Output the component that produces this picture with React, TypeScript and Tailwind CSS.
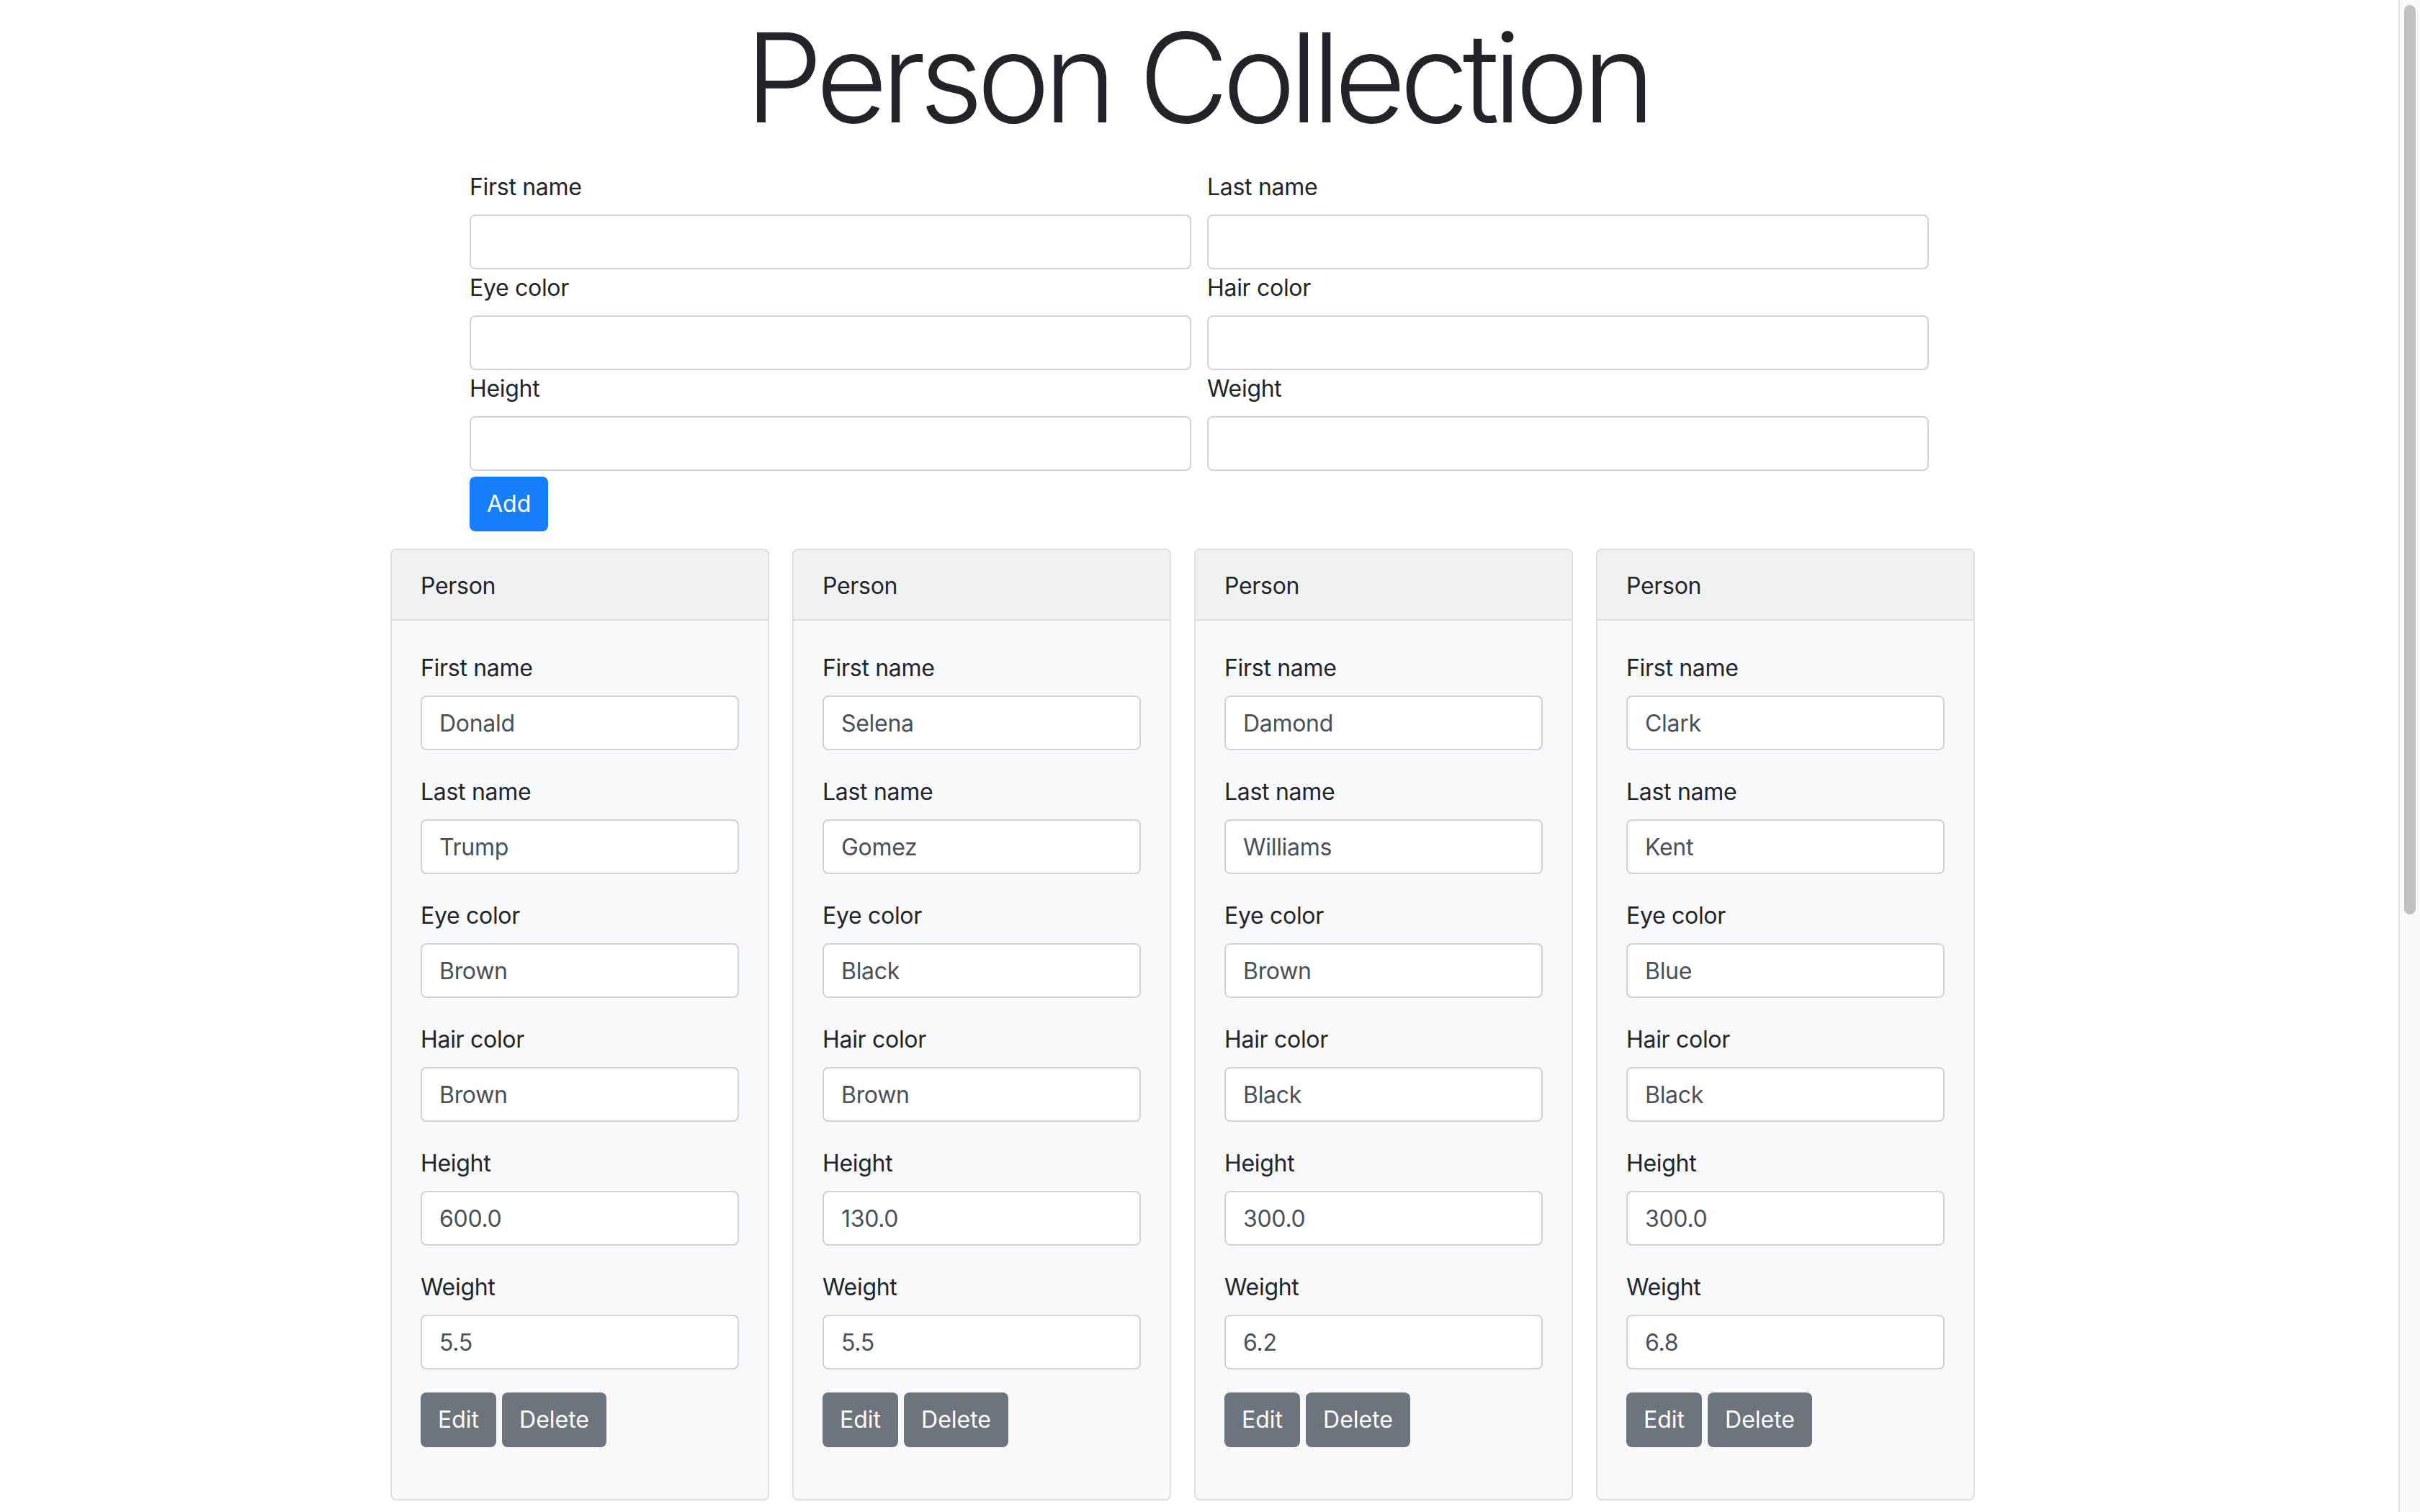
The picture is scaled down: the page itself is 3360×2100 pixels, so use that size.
import React from "react";

const FIELDS = ["First name", "Last name", "Eye color", "Hair color", "Height", "Weight"];

const PEOPLE: string[][] = [
  ["Donald", "Trump", "Brown", "Brown", "600.0", "5.5"],
  ["Selena", "Gomez", "Black", "Brown", "130.0", "5.5"],
  ["Damond", "Williams", "Brown", "Black", "300.0", "6.2"],
  ["Clark", "Kent", "Blue", "Black", "300.0", "6.8"],
];

const inputCls =
  "block w-full h-[76px] rounded-[8px] border-2 border-[#ced4da] bg-white px-[24px] text-[32px] tracking-[-0.3px] text-[#495057] outline-none";

function TopField({ label }: { label: string }) {
  return (
    <div className="flex flex-col">
      <label className="block h-[48px] leading-[52px] mb-[16px]">{label}</label>
      <input
        readOnly
        className={inputCls}
        style={{ fontFamily: "Inter, 'Noto Sans', sans-serif" }}
      />
    </div>
  );
}

function PersonCard({ values }: { values: string[] }) {
  return (
    <div className="w-[526px] shrink-0 rounded-[8px] border-2 border-[#dfdfdf] bg-[#f8f9fa] overflow-hidden">
      <div className="h-[98px] px-[40px] pt-[26px] pb-[22px] leading-[48px] bg-[#f0f1f2] border-b-2 border-[#dfdfdf]">
        Person
      </div>
      <div className="px-[40px] pt-[40px] pb-[40px]">
        {FIELDS.map((f, i) => (
          <div key={f} className="mb-[32px]">
            <label className="block h-[48px] leading-[52px] mb-[16px]">{f}</label>
            <input
              readOnly
              value={values[i]}
              className={inputCls}
              style={{ fontFamily: "Inter, 'Noto Sans', sans-serif" }}
            />
          </div>
        ))}
        <div className="flex gap-[8px] mb-[32px]">
          <button className="h-[76px] px-[24px] rounded-[8px] bg-[#6c757d] text-white text-[32px] leading-[48px] tracking-normal">
            Edit
          </button>
          <button className="h-[76px] px-[24px] rounded-[8px] bg-[#6c757d] text-white text-[32px] leading-[48px] tracking-normal">
            Delete
          </button>
        </div>
      </div>
    </div>
  );
}

export default function App() {
  return (
    <div
      className="flex h-screen w-full overflow-hidden bg-white text-[#212529] text-[32px] leading-[48px] tracking-[-0.3px]"
      style={{ fontFamily: "Inter, 'Noto Sans', sans-serif" }}
    >
      <main className="flex-1 flex flex-col">
        <h1 className="mt-[4px] mb-[24px] h-[206px] text-center text-[172px] leading-[206px] font-light tracking-[-0.052em] pr-[6px]">
          Person Collection
        </h1>
        <div className="w-[2026px] mx-auto">
          <div className="grid grid-cols-2 gap-x-[22px]">
            {FIELDS.map((f) => (
              <TopField key={f} label={f} />
            ))}
          </div>
          <button className="mt-[8px] h-[76px] px-[24px] rounded-[8px] bg-[#157ffb] text-white text-[32px] leading-[48px] tracking-normal">
            Add
          </button>
        </div>
        <div className="mt-[24px] ml-[542px] flex gap-[32px]">
          {PEOPLE.map((p, i) => (
            <PersonCard key={i} values={p} />
          ))}
        </div>
      </main>
      <aside className="w-[30px] shrink-0 h-full bg-[#fafafa] border-l-2 border-[#e8e8e8] pl-[6px] pt-[7px]">
        <div className="w-[16px] h-[1263px] rounded-full bg-[#c1c1c1]" />
      </aside>
    </div>
  );
}
